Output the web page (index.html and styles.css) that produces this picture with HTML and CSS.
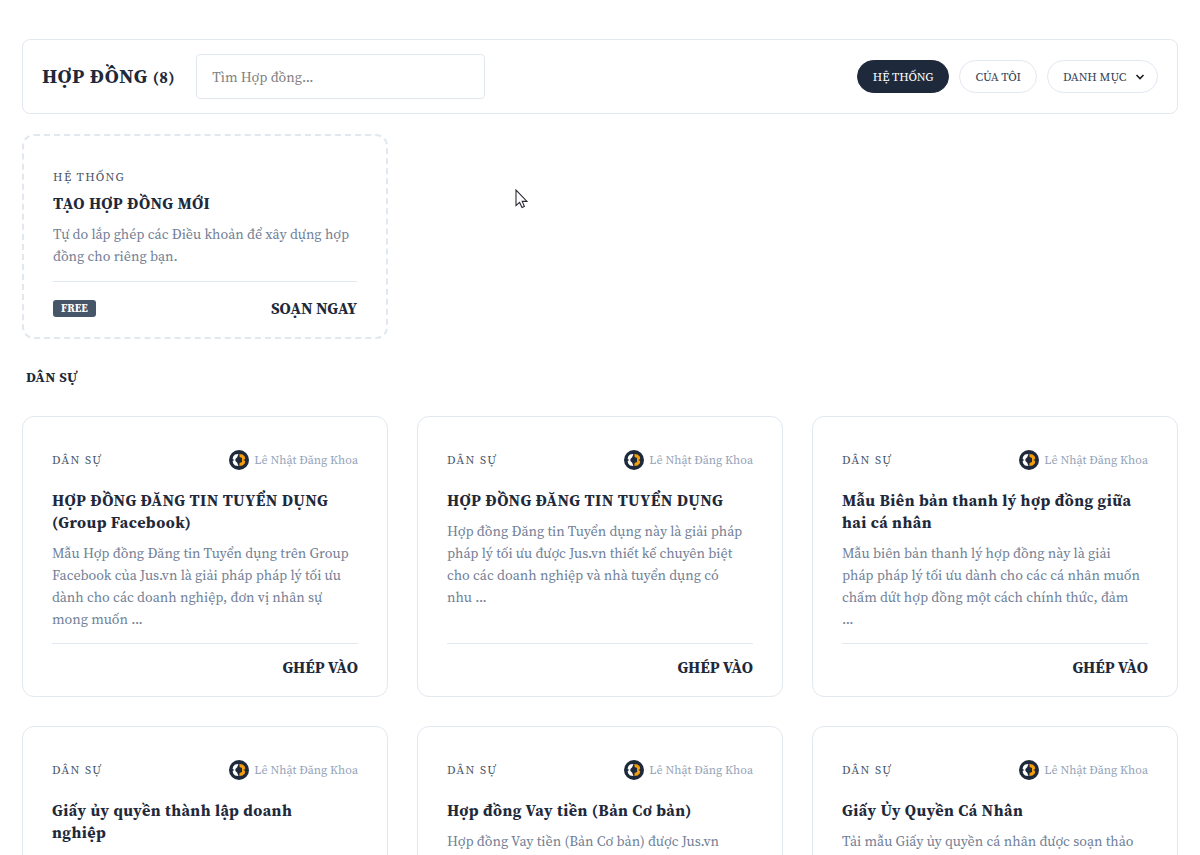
FILE: index.html
```html
<!DOCTYPE html>
<html lang="vi">
<head>
<meta charset="utf-8">
<meta name="viewport" content="width=device-width, initial-scale=1">
<title>Hợp đồng</title>
<link rel="stylesheet" href="styles.css">
</head>
<body>
<svg class="defs" width="0" height="0" aria-hidden="true">
  <symbol id="avatar" viewBox="0 0 20 20">
    <circle cx="10" cy="10" r="10" fill="#1e293b"/>
    <path d="M9.4 4 L6 4.6 L4.2 6.6 L3.6 9 L5.4 10 L3.6 11 L4.2 13.6 L6 15.4 L9.4 16 L8.2 12.8 L6.4 11 V9 L8.2 7.2 Z" fill="#fff"/>
    <path d="M10.4 4 L13.6 4.6 L15.8 6.6 L16.2 9 L14.4 10 L16.2 11 L15.8 13.6 L13.6 15.4 L10.4 16 L10.6 13 L13 12 V8 L10.6 7 Z" fill="#f59e0b"/>
  </symbol>
</svg>
<main class="page">
  <header class="toolbar">
    <h1 class="toolbar-title">HỢP ĐỒNG <span class="count">(8)</span></h1>
    <input class="search" type="search" placeholder="Tìm Hợp đồng..." aria-label="Tìm Hợp đồng">
    <nav class="filters" aria-label="Bộ lọc">
      <button class="pill pill-active" type="button">HỆ THỐNG</button>
      <button class="pill" type="button">CỦA TÔI</button>
      <div class="select-wrap">
        <select class="pill pill-select" aria-label="Danh mục"><option>DANH MỤC</option></select>
        <svg class="chevron" width="10" height="6" viewBox="0 0 10 6" aria-hidden="true"><path d="M1.5 1 L5 4.5 L8.5 1" fill="none" stroke="#1e1e1e" stroke-width="1.6"/></svg>
      </div>
    </nav>
  </header>

  <section class="grid">
    <article class="card card-create">
      <span class="category">HỆ THỐNG</span>
      <h2 class="card-title">TẠO HỢP ĐỒNG MỚI</h2>
      <p class="desc">Tự do lắp ghép các Điều khoản để xây dựng hợp đồng cho riêng bạn.</p>
      <div class="card-foot"><span class="badge">FREE</span><button class="action" type="button">SOẠN NGAY</button></div>
    </article>
  </section>

  <h2 class="section-title">DÂN SỰ</h2>

  <section class="grid">
    <article class="card">
      <div class="card-head"><span class="category">DÂN SỰ</span><span class="author"><svg class="avatar" width="20" height="20"><use href="#avatar"/></svg>Lê Nhật Đăng Khoa</span></div>
      <h3 class="card-title">HỢP ĐỒNG ĐĂNG TIN TUYỂN DỤNG (Group Facebook)</h3>
      <p class="desc">Mẫu Hợp đồng Đăng tin Tuyển dụng trên Group Facebook của Jus.vn là giải pháp pháp lý tối ưu dành cho các doanh nghiệp, đơn vị nhân sự mong muốn ...</p>
      <div class="card-foot"><button class="action" type="button">GHÉP VÀO</button></div>
    </article>
    <article class="card">
      <div class="card-head"><span class="category">DÂN SỰ</span><span class="author"><svg class="avatar" width="20" height="20"><use href="#avatar"/></svg>Lê Nhật Đăng Khoa</span></div>
      <h3 class="card-title">HỢP ĐỒNG ĐĂNG TIN TUYỂN DỤNG</h3>
      <p class="desc">Hợp đồng Đăng tin Tuyển dụng này là giải pháp pháp lý tối ưu được Jus.vn thiết kế chuyên biệt cho các doanh nghiệp và nhà tuyển dụng có nhu&nbsp;...</p>
      <div class="card-foot"><button class="action" type="button">GHÉP VÀO</button></div>
    </article>
    <article class="card">
      <div class="card-head"><span class="category">DÂN SỰ</span><span class="author"><svg class="avatar" width="20" height="20"><use href="#avatar"/></svg>Lê Nhật Đăng Khoa</span></div>
      <h3 class="card-title">Mẫu Biên bản thanh lý hợp đồng giữa hai cá nhân</h3>
      <p class="desc">Mẫu biên bản thanh lý hợp đồng này là giải<br>pháp pháp lý tối ưu dành cho các cá nhân muốn<br>chấm dứt hợp đồng một cách chính thức, đảm<br>...</p>
      <div class="card-foot"><button class="action" type="button">GHÉP VÀO</button></div>
    </article>
    <article class="card">
      <div class="card-head"><span class="category">DÂN SỰ</span><span class="author"><svg class="avatar" width="20" height="20"><use href="#avatar"/></svg>Lê Nhật Đăng Khoa</span></div>
      <h3 class="card-title">Giấy ủy quyền thành lập doanh<br>nghiệp</h3>
    </article>
    <article class="card">
      <div class="card-head"><span class="category">DÂN SỰ</span><span class="author"><svg class="avatar" width="20" height="20"><use href="#avatar"/></svg>Lê Nhật Đăng Khoa</span></div>
      <h3 class="card-title">Hợp đồng Vay tiền (Bản Cơ bản)</h3>
      <p class="desc">Hợp đồng Vay tiền (Bản Cơ bản) được Jus.vn</p>
    </article>
    <article class="card">
      <div class="card-head"><span class="category">DÂN SỰ</span><span class="author"><svg class="avatar" width="20" height="20"><use href="#avatar"/></svg>Lê Nhật Đăng Khoa</span></div>
      <h3 class="card-title">Giấy Ủy Quyền Cá Nhân</h3>
      <p class="desc">Tải mẫu Giấy ủy quyền cá nhân được soạn thảo</p>
    </article>
  </section>
</main>
<svg class="pointer" width="13" height="20" viewBox="0 0 13 20" aria-hidden="true"><path d="M1 1 V16.5 L4.6 13.4 L7 18.6 L9.4 17.5 L7.2 12.4 H12 Z" fill="#fff" stroke="#2b2b38" stroke-width="1.1"/></svg>
</body>
</html>
```

FILE: styles.css
```css
* { box-sizing: border-box; }
body {
  margin: 0;
  height: 100vh;
  overflow: hidden;
  background: #fff;
  color: #1e293b;
  font-family: "Source Serif 4", "Source Serif Pro", "Liberation Serif", serif;
}
h1, h2, h3, p { margin: 0; }
button, input, select { font-family: inherit; }
.defs { position: absolute; }
.page { padding: 39px 22px 0; }

.toolbar {
  display: flex;
  align-items: center;
  gap: 21px;
  padding: 14px 19px;
  border: 1px solid #e2e8f0;
  border-radius: 8px;
  margin-bottom: 20px;
}
.toolbar-title { font-size: 20px; line-height: 28px; letter-spacing: 0.03em; white-space: nowrap; }
.count { font-size: 16px; }
.search {
  width: 289px;
  height: 45px;
  padding: 0 15px;
  border: 1px solid #e2e8f0;
  border-radius: 4px;
  background: #fff;
  font-size: 14px;
  outline: 0;
}
.search::placeholder { color: #808080; }
.filters { display: flex; gap: 10px; margin-left: auto; }
.pill {
  height: 33px;
  padding: 0 15px;
  border: 1px solid #e2e8f0;
  border-radius: 17px;
  background: #fff;
  color: #334155;
  font-size: 12px;
  white-space: nowrap;
}
.pill-active { background: #1e293b; border-color: #1e293b; color: #fff; }
.select-wrap { position: relative; }
.pill-select { appearance: none; padding-right: 30px; }
.chevron { position: absolute; right: 13px; top: 14px; pointer-events: none; }

.grid { display: grid; grid-template-columns: repeat(3, 1fr); gap: 29px; }
.card {
  display: flex;
  flex-direction: column;
  min-height: 281px;
  padding: 29px 29px 18px;
  border: 1px solid #e2e8f0;
  border-radius: 12px;
}
.card-create { min-height: 0; padding-top: 31px; border: 2px dashed #e2e8f0; }
.card-head { display: flex; align-items: center; justify-content: space-between; height: 28px; margin-bottom: 15px; }
.category { font-size: 12px; line-height: 20px; letter-spacing: 0.12em; color: #475569; }
.card-create .category { margin-bottom: 5px; }
.card-create .desc { margin-bottom: 14px; }
.author { display: flex; align-items: center; gap: 5px; font-size: 12px; color: #94a3b8; }
.card-title { font-size: 16px; line-height: 22px; letter-spacing: 0.03em; margin-bottom: 9px; }
.desc { font-size: 14px; line-height: 22px; color: #718096; margin-bottom: 13px; }
.card-foot {
  display: flex;
  align-items: center;
  justify-content: space-between;
  margin-top: auto;
  padding-top: 12px;
  border-top: 1px solid #e2e8f0;
}
.badge {
  padding: 0 8px;
  border-radius: 3px;
  background: #475569;
  color: #fff;
  font-size: 11px;
  font-weight: 700;
  line-height: 17px;
}
.action {
  margin-left: auto;
  padding: 0;
  border: 0;
  background: none;
  color: #1e293b;
  font-size: 16px;
  font-weight: 700;
  line-height: 22px;
}
.card-create .card-foot { padding-top: 15px; }
.section-title { padding: 28px 4px; font-size: 14px; line-height: 21px; letter-spacing: 0.03em; }
.pointer { position: absolute; left: 515px; top: 189px; }
```
